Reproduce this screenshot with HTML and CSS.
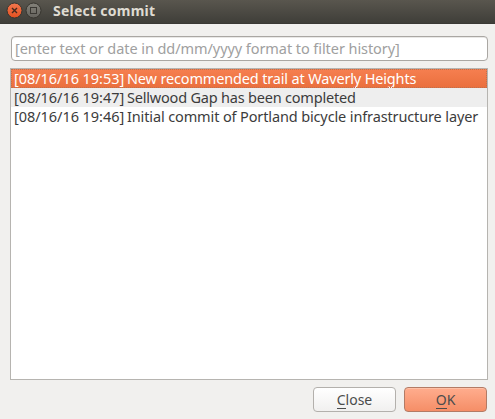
FILE: index.html
```html
<!DOCTYPE html>
<html lang="en">
<head>
<meta charset="utf-8">
<title>Select commit</title>
<link rel="stylesheet" href="styles.css">
</head>
<body>
<div class="dialog">
  <header class="titlebar">
    <svg class="controls" width="38" height="20" viewBox="0 0 38 20">
      <defs>
        <linearGradient id="close-fill" x1="0" y1="0" x2="0" y2="1"><stop offset="0" stop-color="#f4784f"/><stop offset="1" stop-color="#e4501f"/></linearGradient>
        <linearGradient id="max-fill" x1="0" y1="0" x2="0" y2="1"><stop offset="0" stop-color="#84827a"/><stop offset="1" stop-color="#64625c"/></linearGradient>
      </defs>
      <circle cx="8.5" cy="10.5" r="7.5" fill="url(#close-fill)" stroke="#37352f" stroke-width="1"/>
      <path d="M6 8l5 5M11 8l-5 5" stroke="#46291d" stroke-width="1.4"/>
      <circle cx="27.5" cy="10.5" r="7.5" fill="url(#max-fill)" stroke="#37352f" stroke-width="1"/>
      <rect x="24.5" y="7.5" width="6" height="6" fill="none" stroke="#3a3833"/>
    </svg>
    <h1 class="title">Select commit</h1>
  </header>
  <main class="content">
    <div class="filter"><span class="placeholder">[enter text or date in dd/mm/yyyy format to filter history]</span></div>
    <div class="list">
      <div class="row selected"><span class="date">[08/16/16 19:53]</span><span class="message first">New recommended trail at Waverly Heights</span></div>
      <div class="row alternate"><span class="date">[08/16/16 19:47]</span><span class="message second">Sellwood Gap has been completed</span></div>
      <div class="row"><span class="date">[08/16/16 19:46]</span><span class="message third">Initial commit of Portland bicycle infrastructure layer</span></div>
    </div>
    <footer class="actions">
      <div class="button"><span class="mnemonic">C</span>lose</div>
      <div class="button primary"><span class="mnemonic">O</span>K</div>
    </footer>
  </main>
</div>
</body>
</html>
```
FILE: styles.css
```css
* { box-sizing: border-box; }
body { margin: 0; background: #f1f0ee; font-family: "Noto Sans", sans-serif; font-size: 14px; color: #3c3c3c; }
.dialog { height: 419px; display: flex; flex-direction: column; }
.titlebar { height: 24px; flex: none; display: flex; align-items: flex-start; padding-left: 6px; background: linear-gradient(#59564e, #3f3e39); border-bottom: 1px solid #3a3935; }
.controls { display: block; }
.title { margin: 0 0 0 9px; font-size: 14px; line-height: 22px; font-weight: 700; color: #dfdbd2; letter-spacing: 0.25px; white-space: nowrap; }
.content { flex: 1; display: flex; flex-direction: column; padding: 12px 7px 7px 10px; }
.filter { height: 25px; margin-left: 1px; padding: 0 3px; border: 1px solid #aaa7a3; border-radius: 4px; background: #fff; box-shadow: inset 0 1px #e9e8e6; font-size: 14.5px; line-height: 23px; color: #a0a0a0; white-space: nowrap; }
.placeholder { letter-spacing: -0.07px; }
.list { margin-top: 7px; height: 312px; border: 1px solid #b6b4b0; background: #fff; font-size: 14.5px; }
.row { height: 19px; line-height: 19px; padding-left: 3px; display: flex; white-space: nowrap; }
.selected { color: #fff; background: linear-gradient(#f67f50, #ea6f3d); outline: 1px dotted #bd704e; outline-offset: -1px; }
.alternate { background: #eeeeee; }
.date { width: 113px; flex: none; letter-spacing: -0.05px; }
.first { letter-spacing: -0.16px; }
.second { letter-spacing: -0.2px; }
.third { letter-spacing: -0.13px; }
.actions { margin-top: 7px; display: flex; justify-content: flex-end; gap: 8px; padding-right: 1px; }
.button { width: 83px; height: 25px; border: 1px solid #b3b0ac; border-radius: 4px; background: linear-gradient(#fff, #f1f0ef); text-align: center; line-height: 24px; color: #4c4c4c; }
.primary { border-color: #b37b65; background: linear-gradient(#ffad8e, #f58e67); box-shadow: inset 0 1px #ffc0a6; }
.mnemonic { display: inline-block; height: 21px; line-height: 24px; border-bottom: 1px solid #4c4c4c; vertical-align: top; }
```
